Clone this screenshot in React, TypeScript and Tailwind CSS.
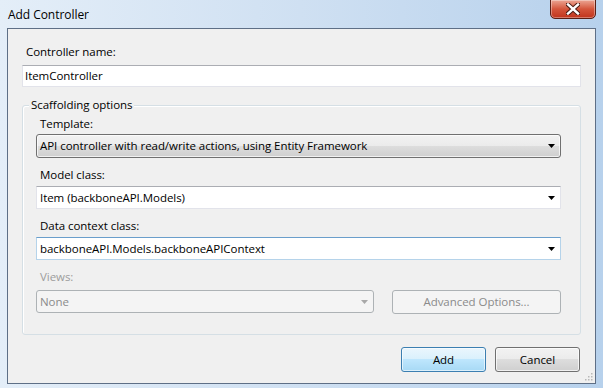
import React from "react";

function Arrow({ disabled }: { disabled?: boolean }) {
  return (
    <svg width="7" height="4" viewBox="0 0 7 4" className="shrink-0">
      <path d="M0 0h7L3.5 4z" fill={disabled ? "#a8a8a8" : "#000"} />
    </svg>
  );
}

function Label({ children, className = "" }: { children: React.ReactNode; className?: string }) {
  return <div className={"h-[16px] leading-[16px] pl-[4px] " + className}>{children}</div>;
}

function CloseGlyph() {
  return (
    <svg width="14" height="12" viewBox="0 0 14 12">
      <path d="M2 1.5L12 10.5M12 1.5L2 10.5" stroke="#4a1a12" strokeWidth="4.4" strokeLinecap="square" />
      <path d="M2 1.5L12 10.5M12 1.5L2 10.5" stroke="#fff" strokeWidth="2.4" strokeLinecap="square" />
    </svg>
  );
}

export default function App() {
  return (
    <div
      className="relative w-[603px] h-[388px] overflow-hidden bg-gradient-to-r from-[#e4eef8] via-[#cfe0f2] to-[#b7d1ec] text-[11.5px] tracking-[-0.05px] text-black"
      style={{ fontFamily: '"Open Sans", "Noto Sans", sans-serif' }}
    >
      {/* title bar */}
      <div className="h-[28px] flex items-center pl-[8px] pt-[2px] text-[12px]">Add Controller</div>
      <button className="absolute top-[-1px] left-[550px] w-[46px] h-[20px] rounded-b-[5px] border border-[#5a1f15] bg-gradient-to-b from-[#eba593] via-[#d4553b] to-[#c0331b] flex items-center justify-center shadow-[inset_0_0_0_1px_rgba(255,255,255,0.35)]">
        <CloseGlyph />
      </button>

      {/* client area */}
      <div className="relative ml-[7px] w-[589px] h-[356px] border border-[#5e6f86] bg-[#f0f0f0] px-[14px]">
        <Label className="mt-[15px] pl-[3px]">Controller name:</Label>
        <div className="mt-[5px] h-[22px] border border-[#e2e3ea] border-t-[#abadb3] bg-white flex items-center pl-[2px]">
          ItemController
        </div>

        {/* scaffolding group */}
        <div className="relative mt-[18px] h-[230px] rounded-[3px] border border-[#d5dfe5] shadow-[inset_1px_1px_0_#fff] pt-[10px] pl-[13px] pr-[19px]">
          <div className="absolute left-[6px] top-[-9px] px-[2px] bg-[#f0f0f0] leading-[16px]">Scaffolding options</div>

          <Label>Template:</Label>
          <div className="mt-[2px] h-[24px] rounded-[3px] border border-[#707070] bg-[linear-gradient(#f2f2f2_0%,#ebebeb_50%,#dddddd_50%,#cfcfcf_100%)] shadow-[inset_0_0_0_1px_rgba(255,255,255,0.7)] flex items-center justify-between pl-[3px] pr-[5px]">
            <span>API controller with read/write actions, using Entity Framework</span>
            <Arrow />
          </div>

          <Label className="mt-[9px]">Model class:</Label>
          <div className="mt-[3px] h-[23px] border border-[#e2e3ea] border-t-[#abadb3] bg-white flex items-center justify-between pl-[3px] pr-[5px]">
            <span>Item (backboneAPI.Models)</span>
            <Arrow />
          </div>

          <Label className="mt-[9px]">Data context class:</Label>
          <div className="mt-[3px] h-[23px] border border-[#b5d3ea] border-t-[#6a9ecb] bg-white flex items-center justify-between pl-[3px] pr-[5px]">
            <span>backboneAPI.Models.backboneAPIContext</span>
            <Arrow />
          </div>

          <Label className="mt-[9px] text-[#9d9d9d]">Views:</Label>
          <div className="mt-[5px] flex gap-[18px]">
            <div className="w-[338px] h-[23px] rounded-[3px] border border-[#adb2b5] bg-[#f4f4f4] flex items-center justify-between pl-[3px] pr-[5px] text-[#8b8b8b]">
              <span>None</span>
              <Arrow disabled />
            </div>
            <div className="flex-1 h-[24px] rounded-[3px] border border-[#adb2b5] bg-[#f4f4f4] flex items-center justify-center text-[#8b8b8b]">
              Advanced Options...
            </div>
          </div>
        </div>

        {/* buttons */}
        <div className="mt-[12px] flex justify-end gap-[9px] pr-[1px]">
          <button className="w-[85px] h-[25px] rounded-[3px] border border-[#3c7fb1] bg-[linear-gradient(#eaf6fd_0%,#d9f0fc_50%,#bee6fd_50%,#a7d9f5_100%)] shadow-[inset_0_0_0_1px_rgba(255,255,255,0.6)]">
            Add
          </button>
          <button className="w-[85px] h-[25px] rounded-[3px] border border-[#707070] bg-[linear-gradient(#f2f2f2_0%,#ebebeb_50%,#dddddd_50%,#cfcfcf_100%)] shadow-[inset_0_0_0_1px_rgba(255,255,255,0.7)]">
            Cancel
          </button>
        </div>

        {/* size grip */}
        <svg className="absolute right-[2px] bottom-[2px]" width="10" height="10" viewBox="0 0 10 10">
          {[
            [8, 2], [8, 5], [5, 5], [8, 8], [5, 8], [2, 8],
          ].map(([x, y]) => (
            <rect key={`${x}-${y}`} x={x} y={y} width="1.5" height="1.5" fill="#b8b8b8" />
          ))}
        </svg>
      </div>
    </div>
  );
}
